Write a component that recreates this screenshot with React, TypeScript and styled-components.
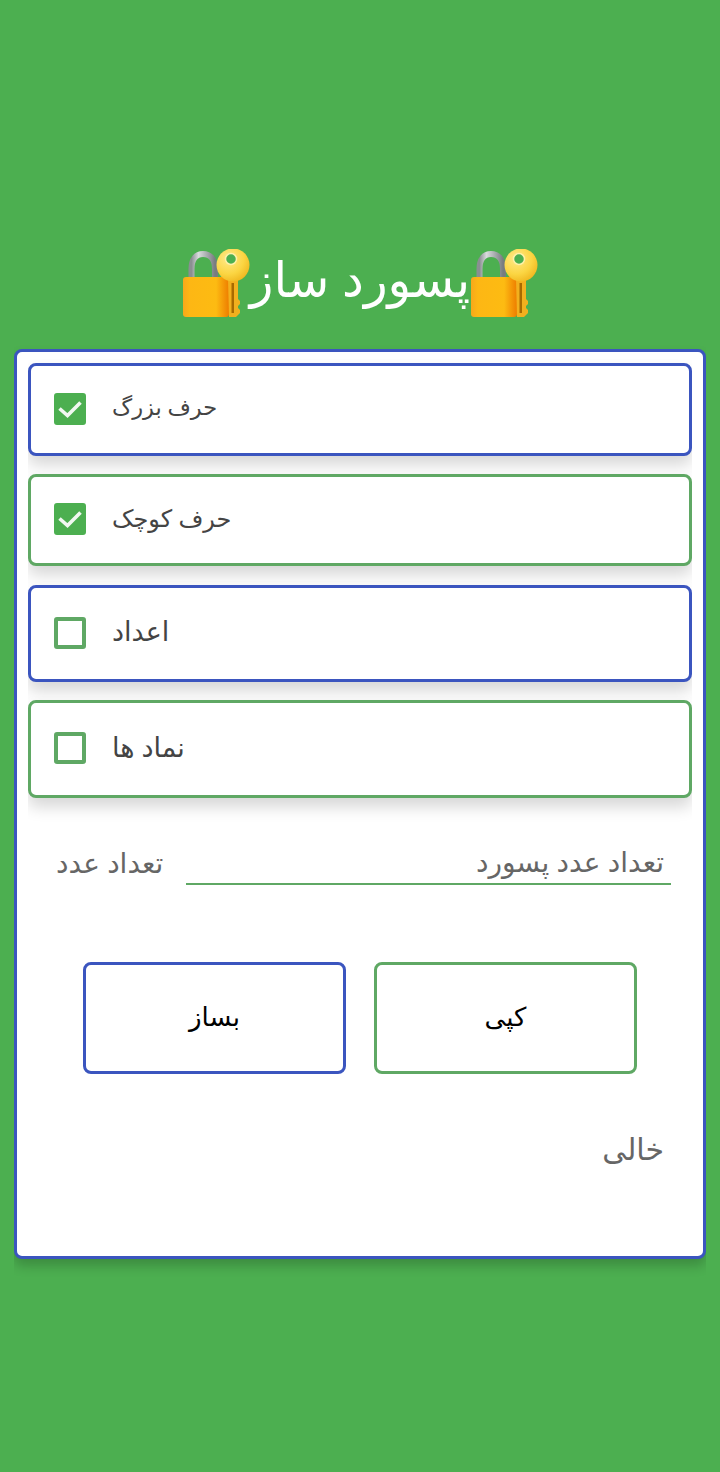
import React from 'react';
import styled, { createGlobalStyle } from 'styled-components';

const BLUE = '#3b55bf';
const LEAF = '#5fa864';
const FONT = '"Noto Sans", "DejaVu Sans", sans-serif';

const GlobalStyle = createGlobalStyle`
  html, body {
    margin: 0;
    padding: 0;
    background: #4caf50;
    font-family: ${FONT};
  }
`;

const Page = styled.div`
  width: 720px;
  height: 1472px;
  background: #4caf50;
  display: flex;
  flex-direction: column;
  align-items: center;
  padding-top: 248px;
  box-sizing: border-box;
`;

const Title = styled.div`
  height: 72px;
  margin-bottom: 29px;
  display: flex;
  align-items: center;
  justify-content: center;
`;

const TitleText = styled.h1`
  margin: 0;
  padding-bottom: 12px;
  font-size: 49px;
  font-weight: 400;
  color: #fff;
  line-height: 60px;
`;

const Card = styled.div`
  width: 692px;
  height: 910px;
  box-sizing: border-box;
  background: #fff;
  border: 3px solid ${BLUE};
  border-radius: 8px;
  padding: 11px;
  box-shadow: 0 7px 12px rgba(0, 0, 0, 0.2);
  clip-path: inset(-10px 0 -30px 0);
  display: flex;
  flex-direction: column;
`;

const OptionRow = styled.label<{ $tint: string; $height: number; $gap: number }>`
  height: ${({ $height }) => $height}px;
  margin-bottom: ${({ $gap }) => $gap}px;
  box-sizing: border-box;
  flex-shrink: 0;
  display: flex;
  align-items: center;
  padding-left: 23px;
  gap: 26px;
  background: #fff;
  border: 3px solid ${({ $tint }) => $tint};
  border-radius: 8px;
  box-shadow: 0 9px 16px rgba(0, 0, 0, 0.16);
  clip-path: inset(-4px 0 -30px 0);
`;

const CheckBox = styled.span<{ $on: boolean }>`
  width: 32px;
  height: 32px;
  margin-bottom: 2px;
  box-sizing: border-box;
  border-radius: 3px;
  border: 4px solid ${({ $on }) => ($on ? '#4caf50' : LEAF)};
  background: ${({ $on }) => ($on ? '#4caf50' : '#fff')};
  display: flex;
  align-items: center;
  justify-content: center;
`;

const OptionLabel = styled.span<{ $size: number }>`
  font-size: ${({ $size }) => $size}px;
  color: #444;
  line-height: 32px;
  padding-bottom: 5px;
`;

const CountRow = styled.div`
  display: flex;
  align-items: flex-end;
  margin-top: 45px;
  padding-left: 28px;
  padding-right: 21px;
`;

const CountLabel = styled.span`
  width: 130px;
  flex-shrink: 0;
  font-size: 28px;
  line-height: 36px;
  color: #666;
  padding-bottom: 5px;
`;

const CountInput = styled.input`
  flex: 1;
  min-width: 0;
  height: 42px;
  box-sizing: border-box;
  border: none;
  border-bottom: 2px solid ${LEAF};
  outline: none;
  background: transparent;
  font-family: ${FONT};
  font-size: 28px;
  text-align: right;
  padding: 0 7px 4px 0;
  color: #666;
  &::placeholder {
    color: #666;
    opacity: 1;
  }
`;

const Actions = styled.div`
  display: flex;
  justify-content: center;
  gap: 28px;
  margin-top: 77px;
`;

const ActionButton = styled.button<{ $tint: string }>`
  width: 263px;
  height: 112px;
  box-sizing: border-box;
  background: #fff;
  border: 3px solid ${({ $tint }) => $tint};
  border-radius: 8px;
  font-family: ${FONT};
  font-size: 26px;
  color: #000;
  padding: 0 0 4px;
`;

const Output = styled.div`
  margin-top: 53px;
  padding-right: 28px;
  text-align: right;
  font-size: 30px;
  line-height: 44px;
  color: #666;
`;

// hand drawn stand-in for the locked-with-key emoji
const LockKeyEmoji = () => (
  <svg width="68" height="70" viewBox="0 0 68 70" aria-hidden="true">
    <defs>
      <linearGradient id="lockBody" x1="0" x2="1" y1="0" y2="0">
        <stop offset="0" stopColor="#f7a81b" />
        <stop offset="0.15" stopColor="#fdb714" />
        <stop offset="0.72" stopColor="#fdbb12" />
        <stop offset="1" stopColor="#ee7d00" />
      </linearGradient>
      <linearGradient id="lockShackle" x1="0" x2="1" y1="0" y2="0">
        <stop offset="0" stopColor="#8a8f92" />
        <stop offset="0.3" stopColor="#d9dcdd" />
        <stop offset="1" stopColor="#777c80" />
      </linearGradient>
      <radialGradient id="keyHead" cx="0.35" cy="0.3" r="0.8">
        <stop offset="0" stopColor="#ffe98a" />
        <stop offset="0.6" stopColor="#fbd542" />
        <stop offset="1" stopColor="#eeb21a" />
      </radialGradient>
    </defs>
    <path d="M9.5 32V20C9.5 10 14 5 21 5C28 5 33 10 33 20V32" fill="none" stroke="url(#lockShackle)" strokeWidth="6" />
    <rect x="1" y="28" width="46" height="40" rx="3" fill="url(#lockBody)" />
    <path d="M46 30H56V50L58 52V55L56 57V59L58 61V64L54 68H47Z" fill="#f2b01e" />
    <rect x="49.5" y="34" width="2.5" height="30" fill="#a86a00" />
    <circle cx="51" cy="16" r="16.5" fill="url(#keyHead)" />
    <circle cx="49" cy="10" r="5.5" fill="#4caf50" stroke="#fff1a8" strokeWidth="1.5" />
  </svg>
);

const Tick = styled.svg`
  overflow: visible;
  flex-shrink: 0;
`;

const CheckMark = () => (
  <Tick width="24" height="24" viewBox="0 0 24 24" aria-hidden="true">
    <path d="M1.5 11.5L9.5 18.5L22.5 5.5" fill="none" stroke="#f1f8f1" strokeWidth="3.6" />
  </Tick>
);

const options = [
  { label: 'حرف بزرگ', on: true, tint: BLUE, height: 93, gap: 18, size: 22.5 },
  { label: 'حرف کوچک', on: true, tint: LEAF, height: 92, gap: 19, size: 24 },
  { label: 'اعداد', on: false, tint: BLUE, height: 97, gap: 18, size: 27 },
  { label: 'نماد ها', on: false, tint: LEAF, height: 98, gap: 0, size: 27 },
];

const App: React.FC = () => (
  <Page>
    <GlobalStyle />
    <Title>
      <LockKeyEmoji />
      <TitleText>پسورد ساز</TitleText>
      <LockKeyEmoji />
    </Title>
    <Card>
      {options.map((option) => (
        <OptionRow key={option.label} $tint={option.tint} $height={option.height} $gap={option.gap}>
          <CheckBox $on={option.on}>{option.on && <CheckMark />}</CheckBox>
          <OptionLabel $size={option.size}>{option.label}</OptionLabel>
        </OptionRow>
      ))}
      <CountRow>
        <CountLabel>تعداد عدد</CountLabel>
        <CountInput placeholder="تعداد عدد پسورد" dir="rtl" />
      </CountRow>
      <Actions>
        <ActionButton $tint={BLUE}>بساز</ActionButton>
        <ActionButton $tint={LEAF}>کپی</ActionButton>
      </Actions>
      <Output>خالی</Output>
    </Card>
  </Page>
);

export default App;
